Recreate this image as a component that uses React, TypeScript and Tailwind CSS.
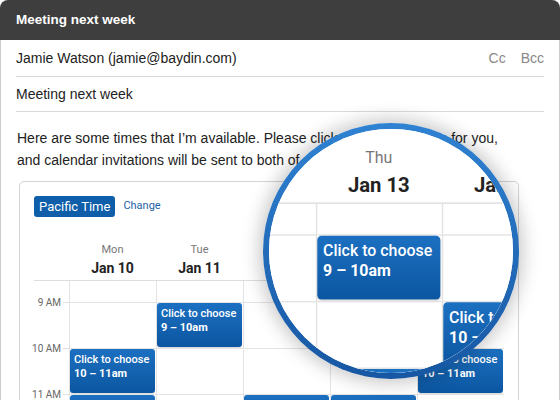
import React from "react";

const DAYS = [
  { d: "Mon", date: "Jan 10", ev: [1, 2] },
  { d: "Tue", date: "Jan 11", ev: [0] },
  { d: "Wed", date: "Jan 12", ev: [2] },
  { d: "Thu", date: "Jan 13", ev: [0, 2] },
  { d: "Fri", date: "Jan 14", ev: [1] },
];
const TIMES = ["9 AM", "10 AM", "11 AM", "12 PM"];
const SLOT = ["9 – 10am", "10 – 11am", "11am – 12pm", "12 – 1pm"];

function Calendar() {
  return (
    <div className="mt-[10px] ml-[3px] w-[500px] h-[300px] border border-[#d4d4d4] rounded-[5px] px-[14px] pt-[14px] font-['Roboto',sans-serif]">
      <div className="flex items-center gap-[8px]">
        <div className="h-[21px] px-[5px] bg-[#0e5ea9] rounded-[3px] text-white text-[13px] leading-[21px]">
          Pacific Time
        </div>
        <span className="text-[11px] text-[#1d62a7]">Change</span>
      </div>
      <div className="flex h-[64px] border-b border-[#dedede] items-end pb-[3px]">
        <div className="w-[35px]" />
        {DAYS.map((day) => (
          <div key={day.d} className="w-[87px] flex flex-col items-center">
            <span className="text-[11px] leading-[14px] text-[#777]">{day.d}</span>
            <span className="mt-[2px] text-[14px] leading-[18px] font-bold text-[#222]">{day.date}</span>
          </div>
        ))}
      </div>
      <div className="flex">
        <div className="w-[35px] shrink-0 pt-[14px] flex flex-col">
          {TIMES.map((t) => (
            <div key={t} className="h-[46px] flex justify-end">
              <div className="h-[14px] flex items-center whitespace-nowrap">
                <span className="text-[10px] text-[#666] pr-[1px]">{t}</span>
                <div className="ml-[1px] w-[6px] h-px bg-[#e0e0e0]" />
              </div>
            </div>
          ))}
        </div>
        {DAYS.map((day) => (
          <div key={day.d} className="w-[87px] shrink-0 border-l border-[#e3e3e3] flex flex-col">
            <div className="h-[21px]" />
            {TIMES.map((t, i) => (
              <div key={t} className="h-[46px] border-t border-[#e3e3e3]">
                {day.ev.includes(i) && (
                  <div className="w-[85px] h-[44px] rounded-[3px] bg-linear-to-b from-[#1c70c1] to-[#0b56a1] pl-[4px] pt-[4px] text-white text-[11px] leading-[14px] whitespace-nowrap shadow-[0_1px_1px_rgba(0,0,0,0.15)]">
                    <div className="font-medium">Click to choose</div>
                    <div className="font-bold">{SLOT[i]}</div>
                  </div>
                )}
              </div>
            ))}
          </div>
        ))}
      </div>
    </div>
  );
}

function Page() {
  return (
    <div className="w-[560px] h-[400px] flex flex-col bg-white font-['Liberation_Sans',Arial,sans-serif]">
      <div className="h-[40px] shrink-0 bg-[#3e3e3e] rounded-t-[8px] flex items-center px-4 text-white text-[13.5px] font-bold">
        Meeting next week
      </div>
      <div className="flex-1 border-x border-[#cccccc] px-[15px] overflow-hidden">
        <div className="h-[37px] flex items-center justify-between border-b border-[#d9d9d9] text-[14px] text-[#222]">
          <span>Jamie Watson (jamie@baydin.com)</span>
          <div className="flex gap-[15px] text-[#888]">
            <span>Cc</span>
            <span>Bcc</span>
          </div>
        </div>
        <div className="h-[35px] flex items-center border-b border-[#d9d9d9] text-[14px] text-[#222]">
          Meeting next week
        </div>
        <div className="mt-[15px] pl-[1px] text-[14px] leading-[22px] text-[#222] whitespace-nowrap">
          <div>Here are some times that I’m available. Please click a time that works for you,</div>
          <div>and calendar invitations will be sent to both of us.</div>
        </div>
        <Calendar />
      </div>
    </div>
  );
}

export default function App() {
  return (
    <div className="relative w-[560px] h-[400px] overflow-hidden bg-white">
      <Page />
      <div className="absolute left-[263px] top-[123px] w-[256px] h-[256px] rounded-full p-[6px] bg-linear-to-b from-[#2f82d2] to-[#1757a3] shadow-[0_0_18px_4px_rgba(0,0,0,0.22)]">
        <div className="relative w-full h-full rounded-full overflow-hidden bg-white">
          <div className="absolute left-0 top-0 origin-top-left [transform:translate(-431px,-332px)_scale(1.448)]">
            <Page />
          </div>
        </div>
      </div>
    </div>
  );
}
